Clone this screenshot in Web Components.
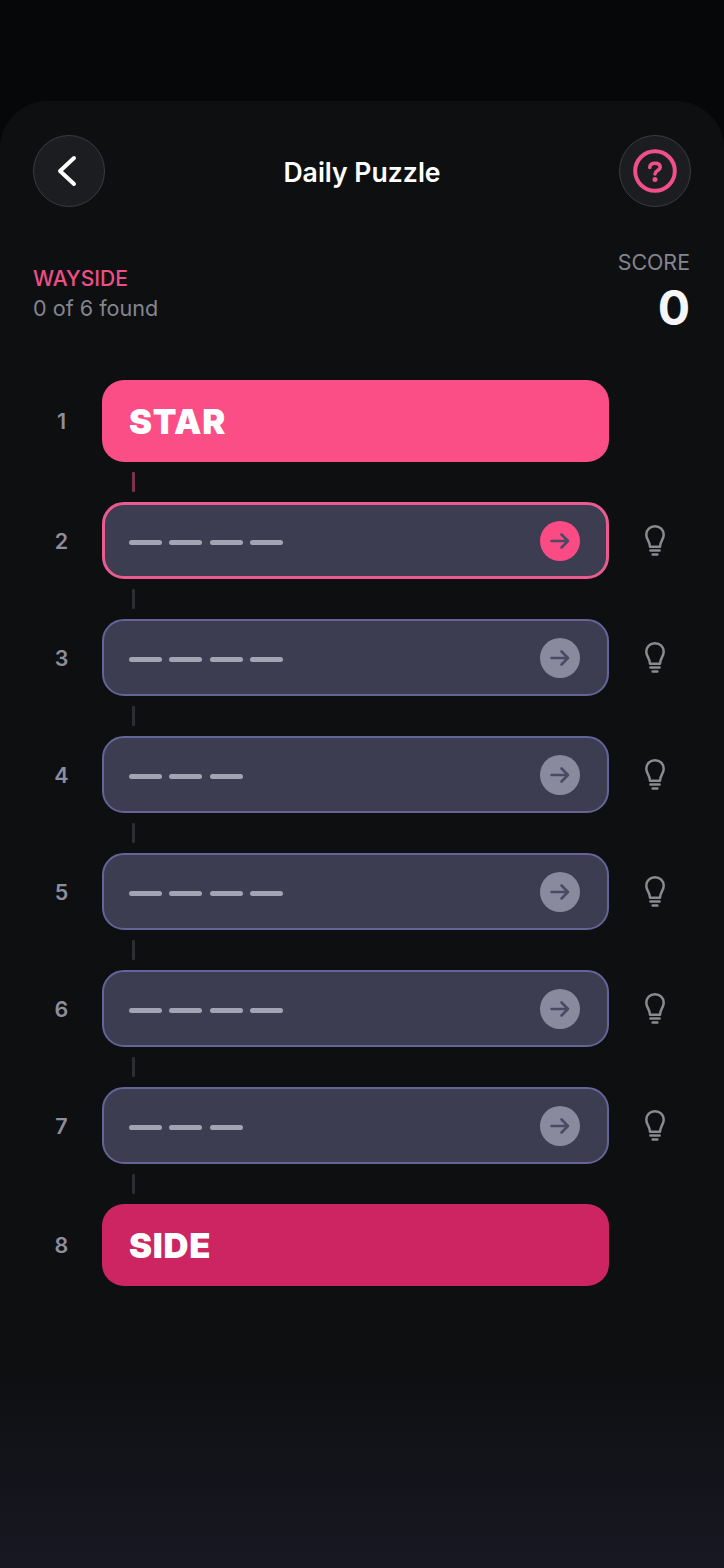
<!DOCTYPE html>
<html lang="en">
<head>
<meta charset="utf-8">
<title>Daily Puzzle</title>
<style>
  html, body { margin: 0; height: 100%; background: #060708; }
  body { font-family: Inter, "Noto Sans", sans-serif; overflow: hidden; }
</style>
</head>
<body>
<puzzle-screen>
  <puzzle-header title="Daily Puzzle"></puzzle-header>
  <puzzle-stats name="WAYSIDE" found="0 of 6 found" score="0"></puzzle-stats>
  <puzzle-row num="1" kind="start" word="STAR"></puzzle-row>
  <puzzle-link tone="pink"></puzzle-link>
  <puzzle-row num="2" kind="active" letters="4"></puzzle-row>
  <puzzle-link></puzzle-link>
  <puzzle-row num="3" letters="4"></puzzle-row>
  <puzzle-link></puzzle-link>
  <puzzle-row num="4" letters="3"></puzzle-row>
  <puzzle-link></puzzle-link>
  <puzzle-row num="5" letters="4"></puzzle-row>
  <puzzle-link></puzzle-link>
  <puzzle-row num="6" letters="4"></puzzle-row>
  <puzzle-link></puzzle-link>
  <puzzle-row num="7" letters="3"></puzzle-row>
  <puzzle-link></puzzle-link>
  <puzzle-row num="8" kind="end" word="SIDE"></puzzle-row>
</puzzle-screen>

<script>
class PuzzleScreen extends HTMLElement {
  constructor() {
    super();
    this.attachShadow({mode: 'open'}).innerHTML = `
      <style>
        :host { display: block; height: 100%; padding-top: 101px; box-sizing: border-box; }
        .sheet {
          height: 100%;
          box-sizing: border-box;
          padding: 34px 33px 0;
          border-radius: 48px 48px 0 0;
          background: linear-gradient(180deg, #0e0f11 0, #0e0f11 1270px, #181823 1467px);
        }
      </style>
      <div class="sheet"><slot></slot></div>`;
  }
}

class PuzzleHeader extends HTMLElement {
  constructor() {
    super();
    this.attachShadow({mode: 'open'}).innerHTML = `
      <style>
        :host { display: flex; align-items: center; justify-content: space-between; }
        .round {
          width: 72px; height: 72px; box-sizing: border-box;
          border-radius: 50%;
          background: #1b1d20;
          border: 1.5px solid #3a3c40;
          display: flex; align-items: center; justify-content: center;
        }
        h1 { margin: 1px 0 0; font-size: 26.6px; line-height: 34px; font-weight: 600; color: #fff; }
        svg { display: block; }
      </style>
      <div class="round">
        <svg width="24" height="34" viewBox="0 0 24 34" fill="none" stroke="#fff" stroke-width="4" stroke-linecap="round" stroke-linejoin="round">
          <path d="M17 4 L3 17 L17 30"/>
        </svg>
      </div>
      <h1></h1>
      <div class="round">
        <svg width="44" height="44" viewBox="0 0 44 44" fill="none">
          <circle cx="22" cy="22" r="19.8" stroke="#f0508a" stroke-width="4"/>
          <path d="M16.8 18.4 C16.8 15.6 19 14.2 22 14.2 C25 14.2 27.2 15.6 27.2 18.2 C27.2 21.4 22 21.8 22 25" stroke="#f0508a" stroke-width="3.6" stroke-linecap="round"/>
          <circle cx="22" cy="30.4" r="2.5" fill="#f0508a"/>
        </svg>
      </div>`;
  }

  connectedCallback() {
    this.shadowRoot.querySelector('h1').textContent = this.getAttribute('title');
  }
}

class PuzzleStats extends HTMLElement {
  constructor() {
    super();
    this.attachShadow({mode: 'open'}).innerHTML = `
      <style>
        :host { display: flex; justify-content: space-between; align-items: flex-end; margin: 43px 0 49px; }
        .name { font-size: 21px; line-height: 24px; font-weight: 500; color: #ec4f86; margin-bottom: 4px; }
        .found { font-size: 21.6px; line-height: 26px; color: #85858f; margin-bottom: 10px; }
        .right { text-align: right; padding-right: 1px; }
        .label { font-size: 21.4px; line-height: 24px; color: #85858f; margin-bottom: 10px; }
        .score { font-size: 48px; line-height: 47px; font-weight: 700; color: #f5f5fa; }
      </style>
      <div>
        <div class="name"></div>
        <div class="found"></div>
      </div>
      <div class="right">
        <div class="label">SCORE</div>
        <div class="score"></div>
      </div>`;
  }

  connectedCallback() {
    this.shadowRoot.querySelector('.name').textContent = this.getAttribute('name');
    this.shadowRoot.querySelector('.found').textContent = this.getAttribute('found');
    this.shadowRoot.querySelector('.score').textContent = this.getAttribute('score');
  }
}

const rowTemplate = document.createElement('template');
rowTemplate.innerHTML = `
  <style>
    :host { display: flex; align-items: center; }
    .num { width: 56px; margin-right: 13px; padding-left: 1px; box-sizing: border-box; text-align: center; font-size: 21.5px; font-weight: 600; color: #8d8d9e; }
    .box {
      width: 507px; height: 77px; box-sizing: border-box;
      border: 2.5px solid #64649a;
      border-radius: 22px;
      background: #3d3d52;
      padding: 0 27px 0 24.5px;
      display: flex; align-items: center; justify-content: space-between;
    }
    .dashes { display: flex; gap: 7.5px; padding-top: 3px; }
    .dashes i { display: block; width: 33px; height: 5px; border-radius: 2.5px; background: #a3a3b4; }
    .go {
      width: 40px; height: 40px; border-radius: 50%;
      background: #8a8a9f;
      display: flex; align-items: center; justify-content: center;
    }
    .hint { margin: 1.5px 0 0 36px; display: block; }
    .word { font-size: 34.6px; font-weight: 900; color: #fff; letter-spacing: 0.7px; }

    :host([kind=active]) .box { border-width: 3px; border-color: #ec5b8f; padding: 0 26px 0 23.5px; }
    :host([kind=active]) .go { background: #fb4b85; }
    :host([kind=start]) .box, :host([kind=end]) .box { height: 82px; border: 0; padding: 0 27px; }
    :host([kind=start]) .box { background: #fb4d86; }
    :host([kind=end]) .box { background: #cc2562; }
  </style>
  <div class="num"></div>
  <div class="box"></div>`;

const arrowIcon = `
  <svg width="24" height="24" viewBox="0 0 24 24" fill="none" stroke="#4a4a62" stroke-width="2.6" stroke-linecap="round" stroke-linejoin="round">
    <path d="M3.5 12 H20 M13.5 5.5 L20 12 L13.5 18.5"/>
  </svg>`;

const bulbIcon = `
  <svg class="hint" width="20" height="32" viewBox="0 0 20 32" fill="none" stroke="#8a8a90" stroke-width="2.5" stroke-linecap="round" stroke-linejoin="round">
    <path d="M5 21.8 C5 16.5 1.3 14.5 1.3 9.8 C1.3 4.8 5 1.3 10 1.3 C15 1.3 18.7 4.8 18.7 9.8 C18.7 14.5 15 16.5 15 21.8 Z"/>
    <path d="M5.4 25.6 H14.6 M7.6 29.4 H12.4"/>
  </svg>`;

class PuzzleRow extends HTMLElement {
  constructor() {
    super();
    this.attachShadow({mode: 'open'}).appendChild(rowTemplate.content.cloneNode(true));
  }

  connectedCallback() {
    const word = this.getAttribute('word');
    const letters = Number(this.getAttribute('letters'));
    this.shadowRoot.querySelector('.num').textContent = this.getAttribute('num');
    const box = this.shadowRoot.querySelector('.box');

    if (word) {
      box.innerHTML = `<span class="word">${word}</span>`;
      return;
    }
    box.innerHTML = `<div class="dashes">${'<i></i>'.repeat(letters)}</div><div class="go">${arrowIcon}</div>`;
    this.shadowRoot.appendChild(document.createRange().createContextualFragment(bulbIcon));
  }
}

class PuzzleLink extends HTMLElement {
  constructor() {
    super();
    this.attachShadow({mode: 'open'}).innerHTML = `
      <style>
        :host { display: block; height: 20px; margin: 10px 0 10px 99px; width: 3px; background: #2d2d33; border-radius: 1px; }
        :host([tone=pink]) { background: #7b3350; }
      </style>`;
  }
}

customElements.define('puzzle-screen', PuzzleScreen);
customElements.define('puzzle-header', PuzzleHeader);
customElements.define('puzzle-stats', PuzzleStats);
customElements.define('puzzle-row', PuzzleRow);
customElements.define('puzzle-link', PuzzleLink);
</script>
</body>
</html>
